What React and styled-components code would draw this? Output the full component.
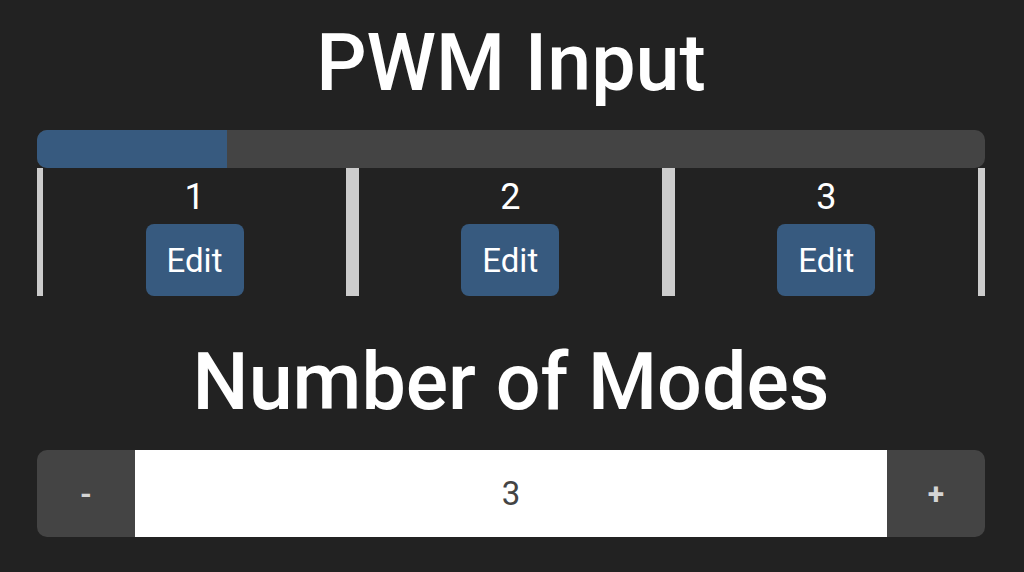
import React, { useState } from "react";
import styled, { createGlobalStyle } from "styled-components";

const GlobalStyle = createGlobalStyle`
  html, body {
    margin: 0;
    padding: 0;
    background: #222222;
  }
  body {
    font-family: Roboto, "Liberation Sans", sans-serif;
    color: #ffffff;
  }
`;

const Page = styled.div`
  padding: 15px 39px 0 37px;
  display: flex;
  flex-direction: column;
`;

const Title = styled.h1`
  margin: ${(p) => p.$top || 0}px 0 0;
  font-size: 79px;
  font-weight: 500;
  line-height: 96px;
  text-align: center;
  color: #ffffff;
`;

const Track = styled.div`
  margin-top: 19px;
  height: 38px;
  background: #444444;
  border-radius: 10px;
  overflow: hidden;
  display: flex;
`;

const Fill = styled.div`
  background: #375a7f;
  height: 100%;
`;

const Modes = styled.div`
  display: grid;
  grid-template-columns: repeat(${(p) => p.$count}, 1fr);
`;

const ModeCell = styled.div`
  border-left: 6px solid #cccccc;
  border-right: 7px solid #cccccc;
  margin-left: ${(p) => (p.$first ? 0 : -0.5)}px;
  display: flex;
  flex-direction: column;
  align-items: center;
  padding-top: 2px;
`;

const ModeNumber = styled.div`
  font-size: 36px;
  line-height: 54px;
  color: #ffffff;
`;

const EditButton = styled.button`
  width: 98px;
  height: 72px;
  border: none;
  border-radius: 8px;
  background: #375a7f;
  color: #ffffff;
  font-family: Roboto, "Liberation Sans", sans-serif;
  font-size: 33px;
  padding: 0;
  cursor: pointer;
`;

const InputGroup = styled.div`
  margin-top: 20px;
  height: 87px;
  display: flex;
`;

const StepButton = styled.button`
  width: 98px;
  border: none;
  background: #444444;
  color: #d4d4d4;
  font-family: Roboto, "Liberation Sans", sans-serif;
  font-size: 30px;
  font-weight: 700;
  padding: 0;
  border-radius: ${(p) => (p.$side === "left" ? "10px 0 0 10px" : "0 10px 10px 0")};
`;

const NumberField = styled.input`
  flex: 1;
  min-width: 0;
  border: none;
  outline: none;
  background: #ffffff;
  color: #444444;
  text-align: center;
  font-family: Roboto, "Liberation Sans", sans-serif;
  font-size: 33px;
  padding: 0;
`;

export default function App() {
  const [count, setCount] = useState(3);
  const modes = Array.from({ length: count }, (_, i) => i + 1);

  return (
    <>
      <GlobalStyle />
      <Page>
        <Title>PWM Input</Title>
        <Track>
          <Fill style={{ width: `${100 / (count + 2)}%` }} />
        </Track>
        <Modes $count={count}>
          {modes.map((m) => (
            <ModeCell key={m} $first={m === 1}>
              <ModeNumber>{m}</ModeNumber>
              <EditButton>Edit</EditButton>
            </ModeCell>
          ))}
        </Modes>
        <Title $top={38}>Number of Modes</Title>
        <InputGroup>
          <StepButton $side="left" onClick={() => setCount((c) => Math.max(1, c - 1))}>
            -
          </StepButton>
          <NumberField
            type="text"
            value={count}
            onChange={(e) => setCount(Number(e.target.value) || 1)}
          />
          <StepButton $side="right" onClick={() => setCount((c) => c + 1)}>
            +
          </StepButton>
        </InputGroup>
      </Page>
    </>
  );
}
